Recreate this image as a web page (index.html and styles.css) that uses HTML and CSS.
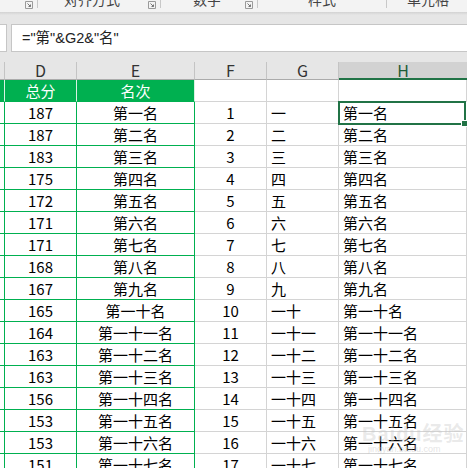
FILE: index.html
```html
<!DOCTYPE html>
<html>
<head>
<meta charset="utf-8">
<link rel="stylesheet" href="styles.css">
</head>
<body>
<div class="ribbon">
  <div class="grp g0"><span class="launch"><svg viewBox="0 0 8 8" width="8" height="8"><path d="M0.5 0.5H7.5V7.5H0.5Z" fill="none" stroke="#9a9a9a"/><path d="M2.5 2.5L5.5 5.5M3.5 5.5H5.5V3.5" fill="none" stroke="#777"/></svg></span></div>
  <div class="grp g1"><span class="lbl">对齐方式</span><span class="launch"><svg viewBox="0 0 8 8" width="8" height="8"><path d="M0.5 0.5H7.5V7.5H0.5Z" fill="none" stroke="#9a9a9a"/><path d="M2.5 2.5L5.5 5.5M3.5 5.5H5.5V3.5" fill="none" stroke="#777"/></svg></span></div>
  <div class="grp g2"><span class="lbl">数字</span><span class="launch"><svg viewBox="0 0 8 8" width="8" height="8"><path d="M0.5 0.5H7.5V7.5H0.5Z" fill="none" stroke="#9a9a9a"/><path d="M2.5 2.5L5.5 5.5M3.5 5.5H5.5V3.5" fill="none" stroke="#777"/></svg></span></div>
  <div class="grp g3"><span class="lbl">样式</span></div>
  <div class="grp g4"><span class="lbl">单元格</span></div>
</div>
<div class="fbar">
  <div class="namebox"></div>
  <div class="formula">="第"&amp;G2&amp;"名"</div>
</div>
<div class="sheet">
  <div class="ch c"></div><div class="ch">D</div><div class="ch">E</div><div class="ch">F</div><div class="ch">G</div><div class="ch sel">H</div>

  <div class="hd"></div><div class="hd">总分</div><div class="hd">名次</div><div class="gc"></div><div class="gc"></div><div class="gc"></div>

  <div class="tc"></div><div class="tc">187</div><div class="tc">第一名</div><div class="gc n">1</div><div class="gc t">一</div><div class="gc t active">第一名</div>
  <div class="tc"></div><div class="tc">187</div><div class="tc">第二名</div><div class="gc n">2</div><div class="gc t">二</div><div class="gc t">第二名</div>
  <div class="tc"></div><div class="tc">183</div><div class="tc">第三名</div><div class="gc n">3</div><div class="gc t">三</div><div class="gc t">第三名</div>
  <div class="tc"></div><div class="tc">175</div><div class="tc">第四名</div><div class="gc n">4</div><div class="gc t">四</div><div class="gc t">第四名</div>
  <div class="tc"></div><div class="tc">172</div><div class="tc">第五名</div><div class="gc n">5</div><div class="gc t">五</div><div class="gc t">第五名</div>
  <div class="tc"></div><div class="tc">171</div><div class="tc">第六名</div><div class="gc n">6</div><div class="gc t">六</div><div class="gc t">第六名</div>
  <div class="tc"></div><div class="tc">171</div><div class="tc">第七名</div><div class="gc n">7</div><div class="gc t">七</div><div class="gc t">第七名</div>
  <div class="tc"></div><div class="tc">168</div><div class="tc">第八名</div><div class="gc n">8</div><div class="gc t">八</div><div class="gc t">第八名</div>
  <div class="tc"></div><div class="tc">167</div><div class="tc">第九名</div><div class="gc n">9</div><div class="gc t">九</div><div class="gc t">第九名</div>
  <div class="tc"></div><div class="tc">165</div><div class="tc">第一十名</div><div class="gc n">10</div><div class="gc t">一十</div><div class="gc t">第一十名</div>
  <div class="tc"></div><div class="tc">164</div><div class="tc">第一十一名</div><div class="gc n">11</div><div class="gc t">一十一</div><div class="gc t">第一十一名</div>
  <div class="tc"></div><div class="tc">163</div><div class="tc">第一十二名</div><div class="gc n">12</div><div class="gc t">一十二</div><div class="gc t">第一十二名</div>
  <div class="tc"></div><div class="tc">163</div><div class="tc">第一十三名</div><div class="gc n">13</div><div class="gc t">一十三</div><div class="gc t">第一十三名</div>
  <div class="tc"></div><div class="tc">156</div><div class="tc">第一十四名</div><div class="gc n">14</div><div class="gc t">一十四</div><div class="gc t">第一十四名</div>
  <div class="tc"></div><div class="tc">153</div><div class="tc">第一十五名</div><div class="gc n">15</div><div class="gc t">一十五</div><div class="gc t">第一十五名</div>
  <div class="tc"></div><div class="tc">153</div><div class="tc">第一十六名</div><div class="gc n">16</div><div class="gc t">一十六</div><div class="gc t">第一十六名</div>
  <div class="tc"></div><div class="tc">151</div><div class="tc">第一十七名</div><div class="gc n">17</div><div class="gc t">一十七</div><div class="gc t">第一十七名</div>
  <div class="wm"><span class="wm1">Bai<span class="paw">du</span>经验</span><span class="wm2">jingyan.baidu.com</span></div>
</div>
</body>
</html>
```
FILE: styles.css
```css
html, body {
  margin: 0;
  padding: 0;
}
body {
  width: 467px;
  height: 468px;
  overflow: hidden;
  background: #ffffff;
  font-family: "Noto Sans CJK SC", "Noto Sans", sans-serif;
  color: #000;
}
.ribbon {
  height: 12px;
  background: #f3f3f3;
  display: flex;
  overflow: hidden;
}
.grp {
  position: relative;
  height: 12px;
  display: flex;
  align-items: flex-start;
  justify-content: center;
  box-sizing: border-box;
  flex: none;
}
.grp.g0 { width: 38px; border-right: 1px solid #c8c8c8; height: 8px; }
.grp.g1 { width: 123px; border-right: 1px solid #c8c8c8; height: 8px; }
.grp.g2 { width: 97px; border-right: 1px solid #c8c8c8; height: 8px; }
.grp.g3 { width: 129px; border-right: 1px solid #c8c8c8; height: 8px; }
.grp.g4 { width: 80px; }
.lbl {
  font-size: 14px;
  line-height: 14px;
  margin-top: -8px;
  color: #444;
  white-space: nowrap;
}
.g1 .lbl { margin-right: 14px; }
.g2 .lbl { margin-right: 4px; }
.g4 .lbl { margin-left: 2px; }
.launch {
  position: absolute;
  right: 4px;
  top: 1px;
  width: 8px;
  height: 8px;
  display: block;
}
.launch svg { display: block; }
.fbar {
  height: 50px;
  background: #e6e6e6;
  background-image: linear-gradient(#d2d2d2, #e6e6e6 3px);
  box-sizing: border-box;
  padding: 12px 0 10px 0;
  display: flex;
  gap: 4px;
}
.namebox {
  width: 8px;
  margin-left: -1px;
  background: #fff;
  border: 1px solid #c6c6c6;
  border-left: none;
  box-sizing: border-box;
}
.formula {
  flex: 1;
  background: #fff;
  border: 1px solid #c6c6c6;
  border-right: none;
  box-sizing: border-box;
  padding-left: 10px;
  font-family: "Liberation Sans", "Noto Sans CJK SC", sans-serif;
  font-size: 14.5px;
  line-height: 26px;
  color: #222;
}
.sheet {
  position: relative;
  display: grid;
  grid-template-columns: 5px 72px 118px 72px 72px 128px;
  grid-template-rows: 18px 22px;
  grid-auto-rows: 22px;
}
.sheet > div { box-sizing: border-box; }
.ch {
  background: #e6e6e6;
  border-right: 1px solid #c4c4c4;
  border-bottom: 1px solid #ababab;
  text-align: center;
  font-size: 16px;
  line-height: 17px;
  color: #333;
}
.ch.sel {
  background: #d2d2d2;
  border-bottom: 2px solid #217346;
  color: #1d5c38;
  border-right: none;
}
.hd {
  background: #00b050;
  color: #fff;
  border-right: 1px solid #d9f0e2;
  border-bottom: 1px solid #00b050;
  text-align: center;
  font-size: 15px;
  line-height: 21px;
}
.tc {
  border-right: 1px solid #00b050;
  border-bottom: 1px solid #00b050;
  text-align: center;
  font-size: 15px;
  line-height: 21px;
}
.gc {
  border-right: 1px solid #d4d4d4;
  border-bottom: 1px solid #d4d4d4;
  font-size: 15px;
  line-height: 21px;
  white-space: nowrap;
}
.gc.n { text-align: center; }
.gc.t { padding-left: 4px; }
.gc.active {
  position: relative;
  border: 2px solid #217346;
  margin-top: -1px;
  margin-left: -1px;
  height: 24px;
  width: 128px;
  padding-left: 3px;
  line-height: 20px;
}
.gc.active::after {
  content: "";
  position: absolute;
  right: -4px;
  bottom: -4px;
  width: 5px;
  height: 5px;
  background: #217346;
  border: 1px solid #fff;
}
.wm {
  position: absolute;
  left: 362px;
  top: 362px;
  display: flex;
  flex-direction: column;
  pointer-events: none;
}
.wm1 {
  font-family: "Liberation Sans", "Noto Sans CJK SC", sans-serif;
  font-size: 20px;
  font-weight: bold;
  line-height: 20px;
  color: rgba(200, 200, 200, 0.4);
  letter-spacing: 1px;
}
.wm2 {
  font-family: "Liberation Sans", sans-serif;
  font-size: 9px;
  line-height: 11px;
  color: rgba(200, 200, 200, 0.5);
  margin-left: 6px;
}
```
